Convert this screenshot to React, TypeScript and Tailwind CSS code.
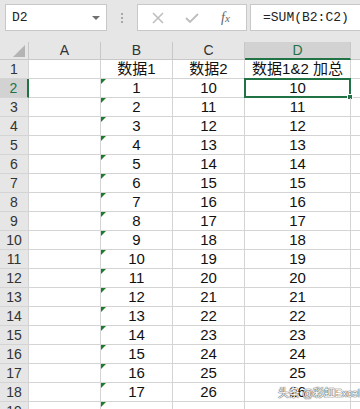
import React from "react";

const rows = Array.from({ length: 17 }, (_, i) => i + 1);

function Cell({ children, w, className = "" }: { children?: React.ReactNode; w: string; className?: string }) {
  return (
    <div className={`${w} h-[19px] shrink-0 border-r border-b border-[#d4d4d4] flex items-center justify-center relative ${className}`}>
      {children}
    </div>
  );
}

function Tri() {
  return <div className="absolute left-0 top-0 w-0 h-0 border-t-[5px] border-r-[5px] border-t-[#1e7a2e] border-r-transparent" />;
}

export default function App() {
  const font = { fontFamily: '"Liberation Sans", "Noto Sans CJK SC", sans-serif' };
  return (
    <div className="relative w-[360px] h-[409px] overflow-hidden bg-white text-[15px] text-[#111]" style={font}>
      {/* formula bar */}
      <div className="h-[42px] bg-[#e6e6e6] flex items-start pt-[4px]">
        <div className="ml-[5px] w-[102px] h-[27px] bg-white border border-[#c8c8c8] flex items-center justify-between pl-[6px] pr-[6px]">
          <span className="text-[13px] text-[#222]" style={{ fontFamily: '"Liberation Mono", monospace' }}>D2</span>
          <div className="w-0 h-0 border-l-[4px] border-r-[4px] border-t-[4px] border-l-transparent border-r-transparent border-t-[#707070]" />
        </div>
        <div className="w-[30px] h-[27px] flex flex-col items-center justify-center gap-[2px]">
          <div className="w-[2px] h-[2px] bg-[#a8a8a8]" />
          <div className="w-[2px] h-[2px] bg-[#a8a8a8]" />
          <div className="w-[2px] h-[2px] bg-[#a8a8a8]" />
        </div>
        <div className="w-[110px] h-[27px] bg-white border border-[#c8c8c8] flex items-center">
          <svg width="14" height="14" viewBox="0 0 14 14" className="ml-[13px]">
            <path d="M2 2 L12 12 M12 2 L2 12" stroke="#bdbdbd" strokeWidth="1.5" />
          </svg>
          <svg width="16" height="14" viewBox="0 0 16 14" className="ml-[19px]">
            <path d="M2 7 L6 11 L14 3" stroke="#bdbdbd" strokeWidth="1.8" fill="none" />
          </svg>
          <span className="ml-[21px] text-[14px] italic text-[#666]" style={{ fontFamily: '"Liberation Serif", serif' }}>
            f<span className="text-[11px]">x</span>
          </span>
        </div>
        <div className="ml-[3px] flex-1 h-[27px] bg-white border border-[#c8c8c8] border-r-0 flex items-center pl-[12px]">
          <span className="text-[13px] text-[#222]" style={{ fontFamily: '"Liberation Mono", monospace' }}>=SUM(B2:C2)</span>
        </div>
      </div>

      {/* column headers */}
      <div className="flex h-[18px] bg-[#e6e6e6] text-[14px] text-[#333]">
        <div className="w-[29px] shrink-0 border-r border-b border-[#c8c8c8] relative">
          <svg width="12" height="12" className="absolute right-[3px] bottom-[2px]">
            <path d="M12 0 L12 12 L0 12 Z" fill="#b4b4b4" />
          </svg>
        </div>
        {["A", "B", "C"].map((c) => (
          <div key={c} className="w-[72px] shrink-0 border-r border-b border-[#c8c8c8] flex items-center justify-center">{c}</div>
        ))}
        <div className="w-[106px] shrink-0 bg-[#d2d2d2] border-r border-[#c8c8c8] border-b-2 border-b-[#217346] flex items-center justify-center text-[#217346]">D</div>
        <div className="flex-1 border-b border-[#c8c8c8]" />
      </div>

      {/* row 1 */}
      <div className="flex">
        <Cell w="w-[29px]" className="bg-[#e6e6e6] border-[#c8c8c8] text-[14px] text-[#333]">1</Cell>
        <Cell w="w-[72px]" />
        <Cell w="w-[72px]">数据1</Cell>
        <Cell w="w-[72px]">数据2</Cell>
        <Cell w="w-[106px]">数据1&amp;2 加总</Cell>
        <div className="flex-1 h-[19px] border-b border-[#d4d4d4]" />
      </div>

      {rows.map((n) => {
        const sel = n === 1;
        return (
          <div key={n} className="flex">
            <Cell
              w="w-[29px]"
              className={`text-[14px] border-[#c8c8c8] ${sel ? "bg-[#d2d2d2] text-[#217346] border-r-2 border-r-[#217346]" : "bg-[#e6e6e6] text-[#333]"}`}
            >
              {n + 1}
            </Cell>
            <Cell w="w-[72px]" />
            <Cell w="w-[72px]">
              <Tri />
              {n}
            </Cell>
            <Cell w="w-[72px]">{n + 9}</Cell>
            <Cell w="w-[106px]">
              {sel && (
                <>
                  <div className="absolute left-[-1px] top-[-1px] right-[-1px] bottom-[-1px] border-2 border-[#217346]" />
                  <div className="absolute right-[-3px] bottom-[-3px] w-[6px] h-[6px] bg-[#217346] border border-white" />
                </>
              )}
              {n + 9}
            </Cell>
            <div className="flex-1 h-[19px] border-b border-[#d4d4d4]" />
          </div>
        );
      })}

      {/* row 19 partial */}
      <div className="flex">
        <Cell w="w-[29px]" className="bg-[#e6e6e6] border-[#c8c8c8] text-[14px] text-[#333]">19</Cell>
        <Cell w="w-[72px]" />
        <Cell w="w-[72px]"><Tri /></Cell>
        <Cell w="w-[72px]" />
        <Cell w="w-[106px]" />
      </div>

      {/* watermark */}
      <div
        className="absolute left-[278px] top-[385px] whitespace-nowrap text-[11px] tracking-[-0.3px] text-white"
        style={{
          textShadow: "0 0 1px #555, 0 0 1px #555, 0 0 1px #555",
          fontFamily: '"Liberation Sans", "Noto Sans CJK SC", sans-serif',
        }}
      >
        头条 @彩虹Excel
      </div>
    </div>
  );
}
